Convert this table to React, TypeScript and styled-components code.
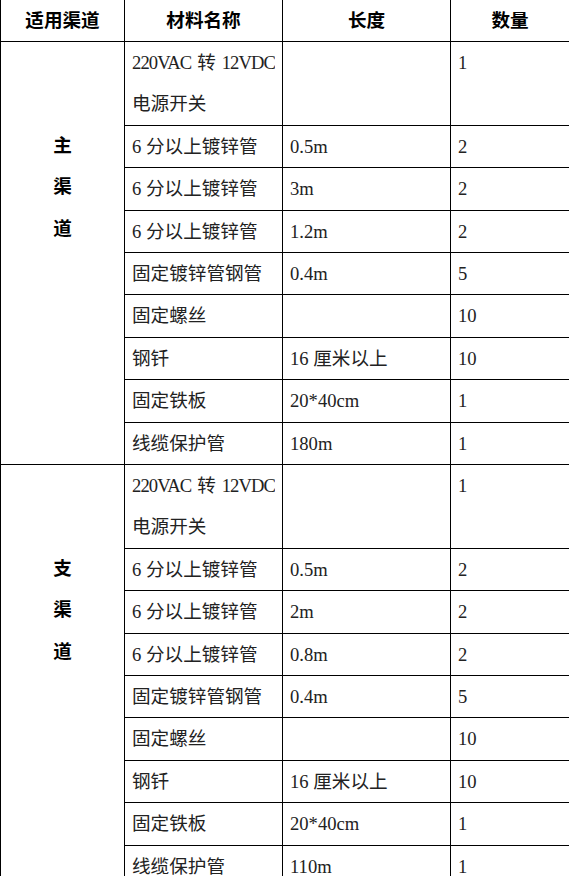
import React from 'react';
import styled, {createGlobalStyle} from 'styled-components';

const GlobalStyle = createGlobalStyle`
  html, body {
    margin: 0;
    padding: 0;
    overflow: hidden;
    background: #ffffff;
  }
`

const LINE = 41.4;

const Table = styled.table`
  border-collapse: collapse;
  table-layout: fixed;
  width: 569px;
  margin-top: -1px;
  font-family: "Liberation Serif", "Noto Sans CJK SC", serif;
  font-size: 18.6px;
  color: #222;
`

const Th = styled.th`
  border: 1px solid #000;
  padding: 0;
  height: 41px;
  line-height: 41px;
  text-align: center;
  font-weight: 700;
  color: #000;
`

const Td = styled.td`
  border: 1px solid #000;
  padding: 0 7px;
  line-height: ${LINE}px;
  vertical-align: top;
  text-align: left;
  white-space: nowrap;
`

const ChannelCell = styled.td`
  border: 1px solid #000;
  padding: ${LINE * 2}px 0 0;
  vertical-align: top;
  text-align: center;
  font-weight: 700;
  color: #000;
`

const ChannelChar = styled.div`
  line-height: ${LINE}px;
  height: ${LINE}px;
`

const SplitLine = styled.div`
  display: flex;
  justify-content: space-between;
  height: ${LINE}px;
  line-height: ${LINE}px;
  overflow: hidden;
`

// latin runs in the wrapped power cell are set a bit tighter, like the half-width original
const Latin = styled.span`
  letter-spacing: -0.9px;
`

const Line = styled.div`
  height: ${LINE}px;
  line-height: ${LINE}px;
`

type Item = { name: string; length: string; qty: string };

const items = (a: string, b: string, c: string, d: string): Item[] => [
    {name: '', length: '', qty: '1'},
    {name: '6 分以上镀锌管', length: a, qty: '2'},
    {name: '6 分以上镀锌管', length: b, qty: '2'},
    {name: '6 分以上镀锌管', length: c, qty: '2'},
    {name: '固定镀锌管钢管', length: '0.4m', qty: '5'},
    {name: '固定螺丝', length: '', qty: '10'},
    {name: '钢钎', length: '16 厘米以上', qty: '10'},
    {name: '固定铁板', length: '20*40cm', qty: '1'},
    {name: '线缆保护管', length: d, qty: '1'},
];

const sections = [
    {channel: '主渠道', rows: items('0.5m', '3m', '1.2m', '180m')},
    {channel: '支渠道', rows: items('0.5m', '2m', '0.8m', '110m')},
];

const PowerName = () => (
    <>
        <SplitLine>
            <Latin>220VAC</Latin>
            <span>转</span>
            <Latin>12VDC</Latin>
        </SplitLine>
        <Line>电源开关</Line>
    </>
);

const App = () => {
    return (
        <>
            <GlobalStyle/>
            <Table>
                <colgroup>
                    <col style={{width: 124}}/>
                    <col style={{width: 158}}/>
                    <col style={{width: 168}}/>
                    <col style={{width: 119}}/>
                </colgroup>
                <thead>
                <tr>
                    <Th>适用渠道</Th>
                    <Th>材料名称</Th>
                    <Th>长度</Th>
                    <Th>数量</Th>
                </tr>
                </thead>
                <tbody>
                {sections.map(section => section.rows.map((row, i) => (
                    <tr key={section.channel + i}>
                        {i === 0 && (
                            <ChannelCell rowSpan={section.rows.length}>
                                {section.channel.split('').map(ch => (
                                    <ChannelChar key={ch}>{ch}</ChannelChar>
                                ))}
                            </ChannelCell>
                        )}
                        <Td>{i === 0 ? <PowerName/> : row.name}</Td>
                        <Td>{row.length}</Td>
                        <Td>{row.qty}</Td>
                    </tr>
                )))}
                </tbody>
            </Table>
        </>
    );
};

export default App;
